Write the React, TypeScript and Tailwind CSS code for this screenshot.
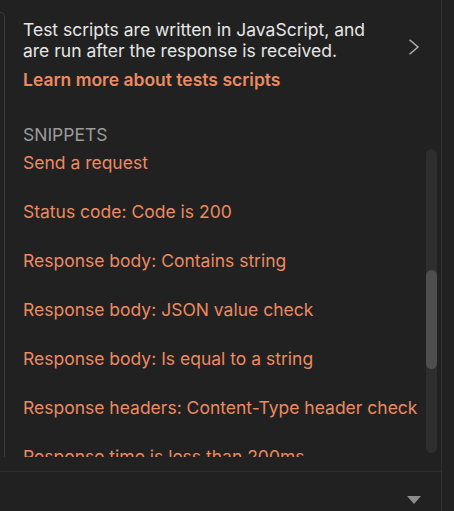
import React from "react";

const snippets = [
  "Send a request",
  "Status code: Code is 200",
  "Response body: Contains string",
  "Response body: JSON value check",
  "Response body: Is equal to a string",
  "Response headers: Content-Type header check",
  "Response time is less than 200ms",
];

export default function App() {
  return (
    <div
      className="flex w-[454px] h-[511px] bg-[#212121] overflow-hidden text-[17.5px]"
      style={{ fontFamily: "Inter, 'Noto Sans', sans-serif" }}
    >
      <div className="flex flex-col w-[442px] shrink-0 border-r border-[#2f2f2f]">
        {/* top panel */}
        <div className="flex h-[457px] shrink-0">
          <div className="w-[5px] shrink-0 mt-[12px] border-t border-r border-[#3a3a3a] rounded-tr-[5px]" />
          <div className="flex flex-col flex-1 min-w-0 pl-[18px] pr-[4px]">
            <div className="flex justify-between pt-[19px]">
              <div className="w-[360px]">
                <p className="text-[#e6e6e6] leading-[21px]">
                  Test scripts are written in JavaScript, and are run after the response is received.
                </p>
                <p className="mt-[8px] text-[#ec8a62] font-semibold leading-[21px]">
                  Learn more about tests scripts
                </p>
              </div>
              <svg
                width="12"
                height="16"
                viewBox="0 0 12 16"
                className="mt-[20px] mr-[17px] shrink-0"
              >
                <path
                  d="M1.5 0.8 L10 8 L1.5 15.2"
                  fill="none"
                  stroke="#b0b0b0"
                  strokeWidth="1.5"
                />
              </svg>
            </div>
            <div className="mt-[33px] text-[#9c9c9c] leading-[24px] uppercase">Snippets</div>
            <div className="flex flex-1 min-h-0 mt-[2px]">
              <div className="flex flex-col flex-1 min-w-0 overflow-hidden pt-[2px] gap-[25px]">
                {snippets.map((s) => (
                  <div key={s} className="text-[#ec8a62] leading-[24px] whitespace-nowrap shrink-0">
                    {s}
                  </div>
                ))}
              </div>
              <div className="w-[11px] shrink-0 mb-[4px] rounded-full bg-[#2e2e2e] pt-[121px]">
                <div className="h-[99px] rounded-full bg-[#4e4e4e]" />
              </div>
            </div>
          </div>
        </div>
        <div className="h-[14px] shrink-0" />
        {/* bottom bar */}
        <div className="flex flex-1 justify-end items-start border-t border-[#2f2f2f] pt-[24px] pr-[20px]">
          <svg width="14" height="8" viewBox="0 0 14 8">
            <path d="M0 0 L14 0 L7 8 Z" fill="#8c8c8c" />
          </svg>
        </div>
      </div>
    </div>
  );
}
